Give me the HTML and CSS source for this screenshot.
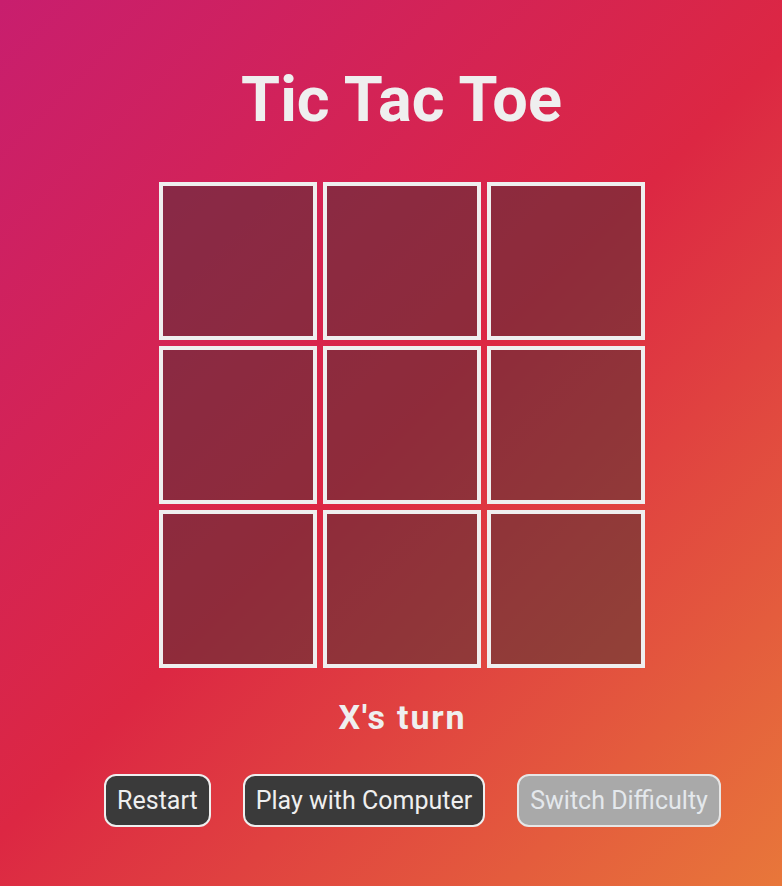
FILE: index.html
```html
<!DOCTYPE html>
<html lang="en">
<head>
<meta charset="utf-8">
<title>Tic Tac Toe</title>
<link rel="stylesheet" href="styles.css">
</head>
<body>
  <main class="page">
    <h1 class="title">Tic Tac Toe</h1>
    <div class="board">
      <div class="cell"></div>
      <div class="cell"></div>
      <div class="cell"></div>
      <div class="cell"></div>
      <div class="cell"></div>
      <div class="cell"></div>
      <div class="cell"></div>
      <div class="cell"></div>
      <div class="cell"></div>
    </div>
    <p class="status">X's turn</p>
    <div class="controls">
      <button class="btn">Restart</button>
      <button class="btn">Play with Computer</button>
      <button class="btn btn-disabled">Switch Difficulty</button>
    </div>
  </main>
</body>
</html>
```
FILE: styles.css
```css
html, body {
  margin: 0;
  padding: 0;
}
body {
  min-height: 100vh;
  background: linear-gradient(135deg, #c81e6e 0%, #dc2743 50%, #e8773a 100%);
  font-family: Roboto, "Liberation Sans", sans-serif;
  color: #efefef;
}
.page {
  display: flex;
  flex-direction: column;
  align-items: center;
  padding-left: 21px;
  padding-top: 68px;
}
.title {
  margin: 0;
  font-size: 63px;
  line-height: 63px;
  font-weight: 700;
  color: #efefef;
}
.board {
  margin-top: 51px;
  display: grid;
  grid-template-columns: repeat(3, 158px);
  grid-auto-rows: 158px;
  gap: 6px;
}
.cell {
  box-sizing: border-box;
  border: 4px solid #efefef;
  background: rgba(66, 48, 50, 0.5);
}
.status {
  margin: 32px 0 0;
  font-size: 34px;
  line-height: 34px;
  font-weight: 700;
  letter-spacing: 1.8px;
  text-indent: 1.8px;
}
.controls {
  margin-top: 40px;
  display: flex;
  gap: 32px;
  padding-left: 22px;
}
.btn {
  box-sizing: border-box;
  height: 53px;
  padding: 0 11px;
  border: 2px solid #efefef;
  border-radius: 12px;
  background: #3a3a3a;
  color: #efefef;
  font-family: inherit;
  font-size: 25px;
  line-height: 28px;
}
.btn-disabled {
  background: #a9a9a9;
  color: #e4e8ec;
  border-color: #e6e6e6;
}
```
